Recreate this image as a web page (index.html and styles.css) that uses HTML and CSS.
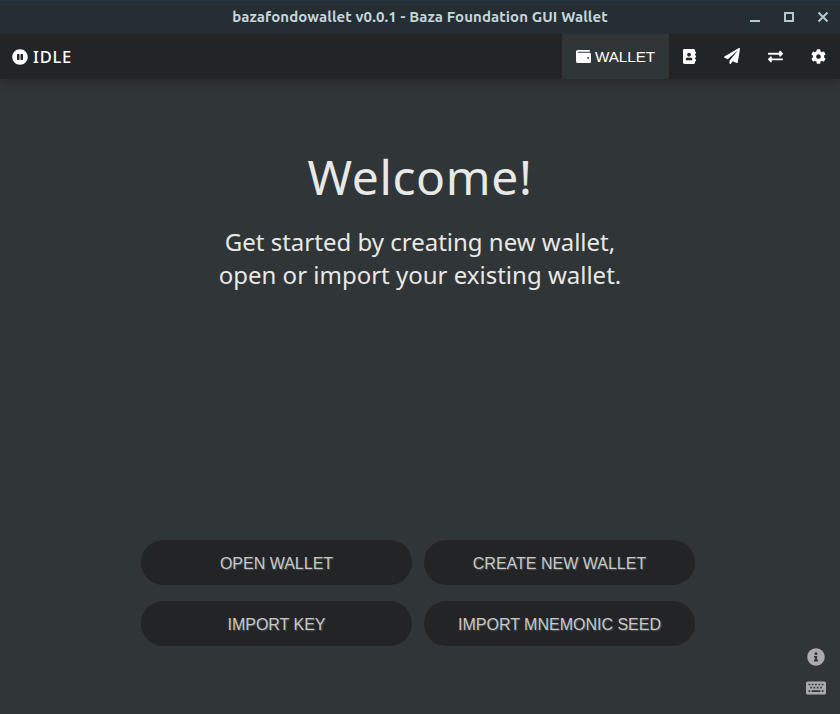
FILE: index.html
```html
<!DOCTYPE html>
<html lang="en">
<head>
<meta charset="utf-8">
<title>bazafondowallet</title>
<link rel="stylesheet" href="styles.css">
</head>
<body>
<div class="window">
  <header class="titlebar">
    <span class="title">bazafondowallet v0.0.1 - Baza Foundation GUI Wallet</span>
    <div class="controls">
      <svg width="12" height="12" viewBox="0 0 12 12"><path d="M1 9h10v2H1z" fill="currentColor"/></svg>
      <svg width="12" height="12" viewBox="0 0 12 12"><path d="M2 2h8v8H2z" fill="none" stroke="currentColor" stroke-width="2"/></svg>
      <svg width="12" height="12" viewBox="0 0 12 12"><path d="M1.500 1.500l9 9M10.500 1.500l-9 9" fill="none" stroke="currentColor" stroke-width="2"/></svg>
    </div>
  </header>
  <nav class="navbar">
    <div class="status">
      <svg width="16" height="16" viewBox="0 0 512 512" fill="currentColor"><path d="M256 8C119 8 8 119 8 256s111 248 248 248 248-111 248-248S393 8 256 8zm-16 328c0 8.800-7.200 16-16 16h-48c-8.800 0-16-7.200-16-16V176c0-8.800 7.200-16 16-16h48c8.800 0 16 7.200 16 16v160zm112 0c0 8.800-7.200 16-16 16h-48c-8.800 0-16-7.200-16-16V176c0-8.800 7.200-16 16-16h48c8.800 0 16 7.200 16 16v160z"/></svg>
      <span>IDLE</span>
    </div>
    <div class="tabs">
      <a class="tab active">
        <svg width="15" height="15" viewBox="0 0 512 512" fill="currentColor"><path d="M461.200 128H80c-8.840 0-16-7.160-16-16s7.160-16 16-16h384c8.840 0 16-7.160 16-16 0-26.510-21.490-48-48-48H64C28.650 32 0 60.650 0 96v320c0 35.350 28.650 64 64 64h397.200c28.020 0 50.800-21.530 50.800-48V176c0-26.470-22.780-48-50.800-48zM416 336c-17.670 0-32-14.330-32-32s14.330-32 32-32 32 14.330 32 32-14.330 32-32 32z"/></svg>
        <span>WALLET</span>
      </a>
      <a class="tab book"><svg width="13" height="15" viewBox="0 0 448 512" fill="currentColor"><path d="M436 160c6.600 0 12-5.400 12-12v-40c0-6.600-5.400-12-12-12h-20V48c0-26.500-21.500-48-48-48H48C21.500 0 0 21.500 0 48v416c0 26.500 21.500 48 48 48h320c26.500 0 48-21.500 48-48v-48h20c6.600 0 12-5.400 12-12v-40c0-6.600-5.400-12-12-12h-20v-64h20c6.600 0 12-5.400 12-12v-40c0-6.600-5.400-12-12-12h-20v-64h20zm-228-32c35.300 0 64 28.700 64 64s-28.700 64-64 64-64-28.700-64-64 28.700-64 64-64zm112 236.800c0 10.600-10 19.200-22.400 19.200H118.400C106 384 96 375.400 96 364.800v-19.200c0-31.800 30.100-57.600 67.200-57.600h5c12.300 5.100 25.700 8 39.800 8s27.600-2.900 39.800-8h5c37.100 0 67.200 25.800 67.200 57.600v19.200z"/></svg></a>
      <a class="tab"><svg width="16" height="16" viewBox="0 0 512 512" fill="currentColor"><path d="M476 3.200L12.500 270.600c-18.100 10.400-15.800 35.600 2.200 43.200L121 358.400l287.300-253.200c5.500-4.900 13.300 2.600 8.600 8.300L176 407v80.500c0 23.600 28.500 32.900 42.500 15.800L282 426l124.600 52.200c14.200 6 30.400-2.900 33-18.200l72-432C515 7.800 493.300-6.800 476 3.200z"/></svg></a>
      <a class="tab"><svg width="15" height="15" viewBox="0 0 512 512" fill="currentColor"><path d="M0 168v-16c0-13.255 10.745-24 24-24h360V80c0-21.367 25.899-32.042 40.971-16.971l80 80c9.372 9.373 9.372 24.569 0 33.941l-80 80C409.956 271.982 384 261.456 384 240v-48H24c-13.255 0-24-10.745-24-24zm488 152H128v-48c0-21.314-25.862-32.080-40.971-16.971l-80 80c-9.372 9.373-9.372 24.569 0 33.941l80 80C102.057 463.997 128 453.437 128 432v-48h360c13.255 0 24-10.745 24-24v-16c0-13.255-10.745-24-24-24z"/></svg></a>
      <a class="tab"><svg width="15" height="15" viewBox="0 0 512 512" fill="currentColor"><path d="M487.400 315.700l-42.600-24.600c4.300-23.200 4.300-47 0-70.200l42.600-24.600c4.900-2.800 7.100-8.600 5.500-14-11.100-35.600-30-67.800-54.700-94.600-3.800-4.100-10-5.100-14.800-2.300L380.800 110c-17.900-15.400-38.500-27.300-60.800-35.100V25.800c0-5.600-3.900-10.500-9.400-11.700-36.700-8.200-74.300-7.800-109.200 0-5.500 1.200-9.400 6.100-9.400 11.700V75c-22.200 7.900-42.800 19.800-60.800 35.100L88.700 85.500c-4.900-2.800-11-1.900-14.800 2.300-24.700 26.700-43.600 58.900-54.700 94.600-1.700 5.400.6 11.200 5.500 14L67.300 221c-4.300 23.200-4.300 47 0 70.200l-42.600 24.600c-4.900 2.800-7.100 8.600-5.500 14 11.100 35.600 30 67.800 54.700 94.600 3.800 4.100 10 5.100 14.800 2.300l42.600-24.600c17.900 15.400 38.500 27.300 60.800 35.100v49.200c0 5.600 3.900 10.500 9.400 11.700 36.700 8.200 74.300 7.800 109.200 0 5.500-1.200 9.400-6.100 9.400-11.700v-49.200c22.200-7.900 42.800-19.800 60.800-35.100l42.600 24.600c4.900 2.800 11 1.900 14.800-2.300 24.700-26.700 43.600-58.900 54.700-94.600 1.500-5.500-.7-11.300-5.600-14.100zM256 336c-44.100 0-80-35.900-80-80s35.900-80 80-80 80 35.900 80 80-35.900 80-80 80z"/></svg></a>
    </div>
  </nav>
  <main class="content">
    <section class="intro">
      <h1>Welcome!</h1>
      <p>Get started by creating new wallet,<br>open or import your existing wallet.</p>
    </section>
    <div class="actions">
      <button>OPEN WALLET</button>
      <button>CREATE NEW WALLET</button>
      <button>IMPORT KEY</button>
      <button>IMPORT MNEMONIC SEED</button>
    </div>
    <aside class="tools">
      <svg width="18" height="18" viewBox="0 0 512 512" fill="currentColor"><path d="M256 8C119.043 8 8 119.083 8 256c0 136.997 111.043 248 248 248s248-111.003 248-248C504 119.083 392.957 8 256 8zm0 110c23.196 0 42 18.804 42 42s-18.804 42-42 42-42-18.804-42-42 18.804-42 42-42zm56 254c0 6.627-5.373 12-12 12h-88c-6.627 0-12-5.373-12-12v-24c0-6.627 5.373-12 12-12h12v-64h-12c-6.627 0-12-5.373-12-12v-24c0-6.627 5.373-12 12-12h64c6.627 0 12 5.373 12 12v100h12c6.627 0 12 5.373 12 12v24z"/></svg>
      <svg width="20" height="14" viewBox="0 0 20 14"><rect y=".5" width="20" height="13" rx="1.600" fill="currentColor"/><path d="M2.500 3.500h15M4.200 6.700h12" stroke="#303537" stroke-width="1.700" stroke-dasharray="1.700 1.600" fill="none"/><path d="M2.500 10.200h1.700M5.600 10.200h8.800M15.800 10.200h1.700" stroke="#303537" stroke-width="1.700"/></svg>
    </aside>
  </main>
</div>
</body>
</html>
```
FILE: styles.css
```css
* { box-sizing: border-box; }
body { margin: 0; background: #303537; }
svg { display: block; flex: none; }
.window { height: 714px; display: flex; flex-direction: column; overflow: hidden; }
.titlebar {
  height: 34px; flex: none; position: relative;
  display: flex; align-items: center; justify-content: center;
  padding-bottom: 2px;
  background: #252e33; border-top: 1px solid #25364a;
  color: #c5d6da;
}
.title { font: 700 15px/20px "Ubuntu", "Noto Sans", sans-serif; letter-spacing: .1px; white-space: nowrap; }
.controls { position: absolute; right: 11px; top: 10px; display: flex; gap: 22px; color: #b6c9cf; }
.navbar {
  height: 45px; flex: none; display: flex; justify-content: space-between;
  background: #222426; color: #fff; box-shadow: 0 2px 10px rgba(0, 0, 0, .3);
}
.status { display: flex; align-items: center; gap: 5px; padding-left: 12px; font: 500 16.500px/24px "Noto Sans", sans-serif; letter-spacing: .8px; }
.tabs { display: flex; }
.tab { display: flex; align-items: center; justify-content: center; width: 43px; }
.tab.book { width: 42px; }
.tab.active { width: 107px; gap: 4px; background: #303537; font: 15.200px/20px "Liberation Sans", sans-serif; }
.tab:not(.active) svg { margin: 0 1px 1px 0; }
.content { flex: 1; display: flex; flex-direction: column; position: relative; }
.intro { height: 461px; padding-top: 65px; text-align: center; color: #e8e8e6; font-family: "Noto Sans", sans-serif; }
h1 { margin: 0 0 15px; font-size: 48px; font-weight: 400; line-height: 66px; letter-spacing: .6px; }
p { margin: 0; font-size: 24px; line-height: 33px; }
.actions { display: grid; grid-template-columns: 271px 271px; gap: 16px 12px; padding-left: 141px; }
.actions button {
  height: 45px; padding: 2px 0 0; border: 0; border-radius: 23px;
  background: #222426; color: #c8c8c6;
  font: 16px/20px "Liberation Sans", sans-serif; text-shadow: 1px 1px 1px rgba(190, 190, 190, .3);
}
.tools { position: absolute; right: 14px; bottom: 19px; display: flex; flex-direction: column; align-items: center; gap: 15px; color: #a9abac; }
```
